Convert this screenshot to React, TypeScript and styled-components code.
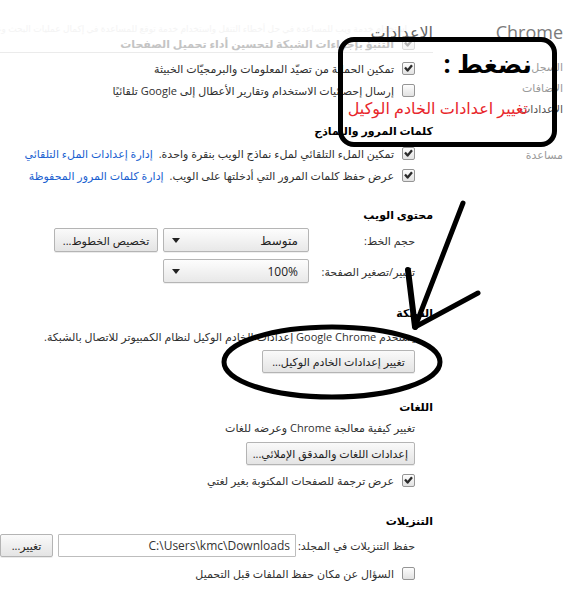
import styled, { createGlobalStyle } from "styled-components";

const GlobalStyle = createGlobalStyle`
  html, body {
    margin: 0;
    padding: 0;
    background: #fff;
  }
  body {
    font-family: "Open Sans", "DejaVu Sans", sans-serif;
  }
`;

const Page = styled.div`
  position: relative;
  width: 574px;
  height: 595px;
  overflow: hidden;
  direction: rtl;
  display: grid;
  grid-template-columns: 141px 433px;
  align-items: start;
  font-size: 11px;
  color: #303030;
`;

const Sidebar = styled.nav`
  padding: 20px 11px 0 0;
`;

const Brand = styled.div`
  direction: ltr;
  text-align: right;
  font-size: 18px;
  line-height: 24px;
  color: #7b7b7b;
`;

const NavList = styled.div`
  margin-top: 12px;
  display: flex;
  flex-direction: column;
`;

const NavItem = styled.div<{ $active?: boolean; $gap?: boolean }>`
  line-height: 21px;
  color: ${(p) => (p.$active ? "#555" : "#9a9a9a")};
  margin-top: ${(p) => (p.$gap ? 25 : 0)}px;
`;

const Main = styled.main`
  display: flex;
  flex-direction: column;
  min-width: 0;
`;

const Header = styled.header`
  display: grid;
  height: 52px;
  border-bottom: 1px solid #ebebeb;
  overflow: hidden;

  & > * {
    grid-area: 1 / 1;
    align-self: start;
  }
`;

const GhostLine = styled.div`
  margin-top: 24px;
  padding-right: 26px;
  font-size: 9px;
  line-height: 10px;
  color: #f4f4f4;
  white-space: nowrap;
`;

const GhostRow = styled.div`
  margin-top: 33px;
  height: 20px;
  padding-right: 18px;
  display: flex;
  align-items: center;
  gap: 8px;
  white-space: nowrap;
  color: #c4c4c4;
  font-weight: bold;
`;

const GhostBox = styled.span`
  display: flex;
  opacity: 0.35;
`;

const Title = styled.h1`
  margin: 20px 0 0;
  font-size: 16px;
  font-weight: normal;
  line-height: 24px;
  color: #666;
`;

const Section = styled.section<{ $mt?: number }>`
  margin-top: ${(p) => p.$mt ?? 21}px;
`;

const Heading = styled.h3`
  margin: 0;
  font-size: 11px;
  line-height: 18px;
  font-weight: bold;
  color: #000;
`;

const Body = styled.div<{ $pt?: number; $gap?: number }>`
  display: flex;
  flex-direction: column;
  align-items: flex-start;
  padding-right: 18px;
  padding-top: ${(p) => p.$pt ?? 0}px;
  gap: ${(p) => p.$gap ?? 0}px;
`;

const Row = styled.div`
  display: flex;
  align-items: center;
  gap: 8px;
  height: 22px;
  white-space: nowrap;
`;

const Link = styled.a`
  color: #1a5fd0;
  text-decoration: none;
  margin-right: 6px;
`;

const Box = styled.span`
  flex: none;
  width: 13px;
  height: 13px;
  box-sizing: border-box;
  border: 1px solid #959595;
  border-radius: 2px;
  background: linear-gradient(#fdfdfd, #e2e2e2);
  display: flex;
  align-items: center;
  justify-content: center;
`;

const FieldRow = styled.div<{ $h?: number }>`
  display: flex;
  align-items: center;
  gap: 5px;
  height: ${(p) => p.$h ?? 24}px;
  white-space: nowrap;
`;

const Label = styled.span<{ $w: number }>`
  width: ${(p) => p.$w}px;
  flex: none;
`;

const Select = styled.div<{ $w: number }>`
  width: ${(p) => p.$w}px;
  height: 24px;
  box-sizing: border-box;
  border: 1px solid #b5b5b5;
  border-radius: 2px;
  background: linear-gradient(#fdfdfd, #e8e8e8);
  box-shadow: 0 1px 0 rgba(0, 0, 0, 0.06);
  display: flex;
  align-items: center;
  justify-content: space-between;
  padding: 0 10px 0 8px;
  color: #222;
  font-size: 12px;
`;

const Caret = styled.span`
  width: 0;
  height: 0;
  border-left: 4px solid transparent;
  border-right: 4px solid transparent;
  border-top: 5px solid #222;
`;

const Button = styled.button<{ $w: number; $h?: number }>`
  width: ${(p) => p.$w}px;
  height: ${(p) => p.$h ?? 23}px;
  flex: none;
  box-sizing: border-box;
  border: 1px solid #b4b4b4;
  border-radius: 2px;
  background: linear-gradient(#fafafa, #e4e4e4);
  box-shadow: 0 1px 0 rgba(0, 0, 0, 0.08);
  font-family: inherit;
  font-size: 11px;
  color: #222;
  padding: 0 6px;
  white-space: nowrap;
`;

const PathInput = styled.div<{ $w: number }>`
  width: ${(p) => p.$w}px;
  height: 23px;
  box-sizing: border-box;
  border: 1px solid #bdbdbd;
  border-radius: 1px;
  background: #fff;
  display: flex;
  align-items: center;
  padding-right: 5px;
  font-size: 12px;
  color: #333;
`;

const Note = styled.div`
  position: absolute;
  left: 338px;
  top: 37px;
  width: 219px;
  height: 110px;
  box-sizing: border-box;
  border: 5px solid #000;
  border-radius: 16px;
  pointer-events: none;
  display: flex;
  flex-direction: column;
  align-items: flex-start;
  padding-right: 20px;
`;

const NoteTitle = styled.div`
  margin-top: 5px;
  font-size: 25px;
  line-height: 32px;
  font-weight: bold;
  color: #000;
  white-space: nowrap;
`;

const NoteAction = styled.div`
  margin: 19px 4px 0 0;
  font-size: 16px;
  line-height: 20px;
  color: #e8262b;
  white-space: nowrap;
`;

const Marks = styled.svg`
  position: absolute;
  left: 0;
  top: 0;
  pointer-events: none;
`;

function Check({ on }: { on?: boolean }) {
  return (
    <Box>
      {on && (
        <svg width="9" height="8" viewBox="0 0 9 8">
          <path d="M1 3.6 L3.6 6.6 L8 1.2" fill="none" stroke="#2b2b2b" strokeWidth="2.3" strokeLinejoin="round" />
        </svg>
      )}
    </Box>
  );
}

export default function App() {
  return (
    <>
      <GlobalStyle />
      <Page>
        <Sidebar>
          <Brand>Chrome</Brand>
          <NavList>
            <NavItem>السجل</NavItem>
            <NavItem>الإضافات</NavItem>
            <NavItem $active>الإعدادات</NavItem>
            <NavItem $gap>مساعدة</NavItem>
          </NavList>
        </Sidebar>

        <Main>
          <Header>
            <GhostLine>
              استخدام خدمة ويب للمساعدة في حل أخطاء التنقل واستخدام خدمة توقع للمساعدة في إكمال عمليات البحث وعناوين URL المكتوبة
            </GhostLine>
            <GhostRow>
              <GhostBox>
                <Check on />
              </GhostBox>
              التنبؤ بإجراءات الشبكة لتحسين أداء تحميل الصفحات
            </GhostRow>
            <Title>الإعدادات</Title>
          </Header>

          <Section $mt={0}>
            <Body $pt={4}>
              <Row>
                <Check on />
                تمكين الحماية من تصيّد المعلومات والبرمجيّات الخبيثة
              </Row>
              <Row>
                <Check />
                إرسال إحصائيات الاستخدام وتقارير الأعطال إلى Google تلقائيًا
              </Row>
            </Body>
          </Section>

          <Section>
            <Heading>كلمات المرور والنماذج</Heading>
            <Body $pt={2}>
              <Row>
                <Check on />
                <span>
                  تمكين الملء التلقائي لملء نماذج الويب بنقرة واحدة.
                  <Link href="#">إدارة إعدادات الملء التلقائي</Link>
                </span>
              </Row>
              <Row>
                <Check on />
                <span>
                  عرض حفظ كلمات المرور التي أدخلتها على الويب.
                  <Link href="#">إدارة كلمات المرور المحفوظة</Link>
                </span>
              </Row>
            </Body>
          </Section>

          <Section $mt={20}>
            <Heading>محتوى الويب</Heading>
            <Body $pt={4} $gap={7}>
              <FieldRow>
                <Label $w={101}>حجم الخط:</Label>
                <Select $w={146}>
                  متوسط
                  <Caret />
                </Select>
                <Button $w={104} $h={24}>تخصيص الخطوط...</Button>
              </FieldRow>
              <FieldRow>
                <Label $w={101}>تكبير/تصغير الصفحة:</Label>
                <Select $w={146}>
                  100%
                  <Caret />
                </Select>
              </FieldRow>
            </Body>
          </Section>

          <Section>
            <Heading>الشبكة</Heading>
            <Body $pt={3} $gap={3}>
              <Row>
                يستخدم Google Chrome إعدادات الخادم الوكيل لنظام الكمبيوتر للاتصال بالشبكة.
              </Row>
              <Button $w={153}>تغيير إعدادات الخادم الوكيل...</Button>
            </Body>
          </Section>

          <Section $mt={25}>
            <Heading>اللغات</Heading>
            <Body $gap={4}>
              <Row>تغيير كيفية معالجة Chrome وعرضه للغات</Row>
              <Button $w={169}>إعدادات اللغات والمدقق الإملائي...</Button>
              <Row>
                <Check on />
                عرض ترجمة للصفحات المكتوبة بغير لغتي
              </Row>
            </Body>
          </Section>

          <Section>
            <Heading>التنزيلات</Heading>
            <Body $pt={4} $gap={5}>
              <FieldRow $h={23}>
                <Label $w={114}>حفظ التنزيلات في المجلد:</Label>
                <PathInput $w={238}>
                  <bdi>C:\Users\kmc\Downloads</bdi>
                </PathInput>
                <Button $w={53}>تغيير...</Button>
              </FieldRow>
              <Row>
                <Check />
                السؤال عن مكان حفظ الملفات قبل التحميل
              </Row>
            </Body>
          </Section>
        </Main>

        <Note>
          <NoteTitle>نضغط :</NoteTitle>
          <NoteAction>تغيير اعدادات الخادم الوكيل</NoteAction>
        </Note>

        <Marks width="574" height="595" viewBox="0 0 574 595">
          <ellipse cx="332" cy="362" rx="108" ry="35" fill="none" stroke="#000" strokeWidth="5" />
          <g stroke="#000" strokeLinecap="round" fill="none">
            <line x1="463" y1="203" x2="415" y2="327" strokeWidth="5" />
            <line x1="408" y1="270" x2="415" y2="327" strokeWidth="6" />
            <line x1="478" y1="293" x2="415" y2="327" strokeWidth="5" />
          </g>
        </Marks>
      </Page>
    </>
  );
}
